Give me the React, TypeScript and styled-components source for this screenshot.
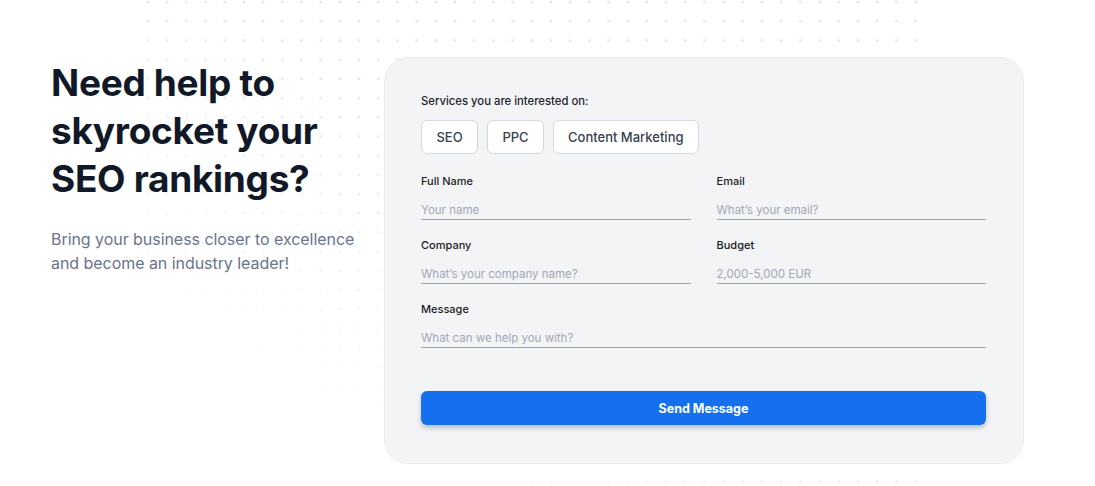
import React from "react"
import styled, { createGlobalStyle } from "styled-components"

const GlobalStyle = createGlobalStyle`
  html, body {
    margin: 0;
    padding: 0;
    background: #ffffff;
  }
  body {
    font-family: Inter, "Noto Sans", sans-serif;
    -webkit-font-smoothing: antialiased;
  }
  * {
    box-sizing: border-box;
  }
`

const Page = styled.section`
  position: relative;
  width: 1095px;
  height: 486px;
  overflow: hidden;
  display: flex;
  align-items: flex-start;
  padding: 57px 0 0 51px;
`

const DotField = styled.div`
  position: absolute;
  top: 0;
  left: 140px;
  width: 786px;
  height: 486px;
  background-image: radial-gradient(circle, #dfe2f0 1.2px, transparent 1.6px);
  background-size: 19.2px 19.2px;
  background-position: -1.6px -7.6px;
  -webkit-mask-image: linear-gradient(to bottom left, #000 45%, transparent 82%);
  mask-image: linear-gradient(to bottom left, #000 45%, transparent 82%);
  pointer-events: none;
`

const Intro = styled.div`
  position: relative;
  width: 333px;
  flex-shrink: 0;
  padding-top: 2px;
`

const Heading = styled.h1`
  margin: 0;
  font-size: 37px;
  line-height: 48px;
  font-weight: 700;
  letter-spacing: -0.3px;
  color: #111827;
`

const Lead = styled.p`
  margin: 24px 0 0;
  font-size: 16px;
  line-height: 24px;
  letter-spacing: -0.05px;
  color: #6b7489;
  width: 320px;
`

const Card = styled.form`
  position: relative;
  width: 640px;
  height: 407px;
  background: #f3f4f6;
  border: 1px solid #eaecef;
  border-radius: 24px;
  padding: 36px 37px 0 36px;
  display: flex;
  flex-direction: column;
`

const SectionLabel = styled.div`
  font-size: 11.3px;
  line-height: 14px;
  font-weight: 500;
  color: #1f2430;
`

const ChipRow = styled.div`
  display: flex;
  gap: 9px;
  margin-top: 12px;
`

const Chip = styled.button`
  height: 34px;
  padding: 0 14px;
  background: #ffffff;
  border: 1px solid #d3d7de;
  border-radius: 6px;
  font-family: Inter, sans-serif;
  font-size: 13px;
  font-weight: 500;
  color: #374151;
  min-width: 57px;
  cursor: pointer;
`

const FieldGrid = styled.div`
  display: grid;
  grid-template-columns: 1fr 1fr;
  column-gap: 26px;
  row-gap: 18px;
  margin-top: 20px;
`

const Field = styled.label<{ $wide?: boolean }>`
  display: flex;
  flex-direction: column;
  grid-column: ${(p) => (p.$wide ? "1 / -1" : "auto")};
`

const FieldLabel = styled.span`
  font-size: 11px;
  line-height: 14px;
  font-weight: 500;
  color: #1a1d24;
`

const Input = styled.input`
  margin-top: 11px;
  height: 21px;
  border: 0;
  border-bottom: 1px solid #9aa1b0;
  background: transparent;
  padding: 3px 0 2px;
  font-family: Inter, sans-serif;
  font-size: 11.5px;
  color: #1f2937;
  outline: none;

  &::placeholder {
    color: #a1a8b8;
  }
`

const SubmitButton = styled.button`
  margin-top: 43px;
  height: 34px;
  width: 100%;
  border: 0;
  border-radius: 6px;
  background: #1570ef;
  color: #ffffff;
  font-family: Inter, sans-serif;
  font-size: 12.5px;
  font-weight: 700;
  padding-bottom: 1px;
  box-shadow: 0 3px 5px rgba(15, 40, 90, 0.25);
  cursor: pointer;
`

const services = ["SEO", "PPC", "Content Marketing"]

const fields = [
  { label: "Full Name", placeholder: "Your name" },
  { label: "Email", placeholder: "What’s your email?" },
  { label: "Company", placeholder: "What’s your company name?" },
  { label: "Budget", placeholder: "2,000-5,000 EUR" },
  { label: "Message", placeholder: "What can we help you with?", wide: true },
]

export default function App() {
  return (
    <>
      <GlobalStyle />
      <Page>
        <DotField />
        <Intro>
          <Heading>
            Need help to
            <br />
            skyrocket your
            <br />
            SEO rankings?
          </Heading>
          <Lead>Bring your business closer to excellence and become an industry leader!</Lead>
        </Intro>
        <Card onSubmit={(e) => e.preventDefault()}>
          <SectionLabel>Services you are interested on:</SectionLabel>
          <ChipRow>
            {services.map((s) => (
              <Chip key={s} type="button">
                {s}
              </Chip>
            ))}
          </ChipRow>
          <FieldGrid>
            {fields.map((f) => (
              <Field key={f.label} $wide={f.wide}>
                <FieldLabel>{f.label}</FieldLabel>
                <Input placeholder={f.placeholder} />
              </Field>
            ))}
          </FieldGrid>
          <SubmitButton type="submit">Send Message</SubmitButton>
        </Card>
      </Page>
    </>
  )
}
